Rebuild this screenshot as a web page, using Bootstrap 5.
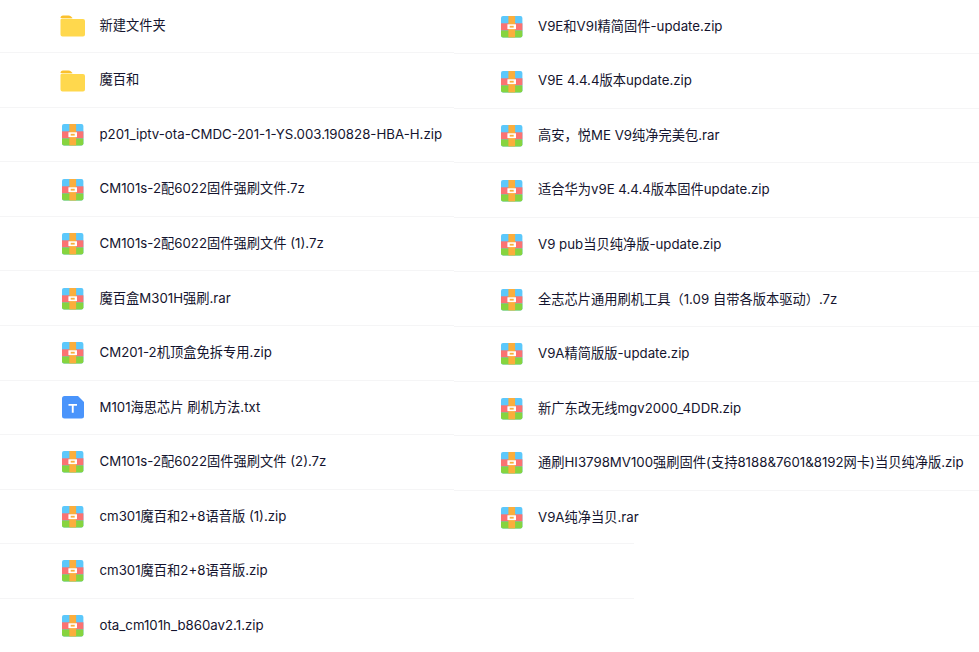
<!DOCTYPE html>
<html lang="zh">
<head>
    <meta charset="UTF-8">
    <title>文件列表</title>
    <link href="https://cdn.jsdelivr.net/npm/bootstrap@5.3.0/dist/css/bootstrap.min.css" rel="stylesheet">
    <style>
        body {
            background: #fff;
            color: #14142e;
            font-family: Inter, "Noto Sans CJK SC", sans-serif;
            font-size: 13.25px;
            font-weight: 400;
            overflow: hidden;
            height: 652px;
        }
        .file-grid {
            display: grid;
            grid-template-columns: 454px 180px 1fr;
            align-items: start;
        }
        .left-list { grid-column: 1 / 3; grid-row: 1; margin-top: -1.3px; }
        .right-list { grid-column: 2 / 4; grid-row: 1; margin-top: -.3px; position: relative; }
        .file-row {
            height: 54.56px;
            border-bottom: 1px solid #f5f5f6;
            padding-left: 59.5px;
            gap: 15px;
            white-space: nowrap;
            background: #fff;
        }
        .file-row span { padding-top: .6px; }
        .right-list .file-row { padding-left: 44.8px; gap: 14.2px; }
        .right-list .file-row:last-child { border-bottom: 0; background: transparent; }
        .file-ico { flex: 0 0 25px; width: 25px; height: 25px; }
    </style>
</head>
<body>
    <svg width="0" height="0" class="position-absolute">
        <defs>
            <symbol id="ico-folder" viewBox="0 0 25 25">
                <path d="M.5 5Q.5 2.500 3 2.500H8.500q1.500 0 2.500 1l1.500 1.500H.5z" fill="#fbc02d"/>
                <path d="M.5 7q0-1.500 1.500-1.500h9.500L13 6h10q2 0 2 2V21.500q0 2-2 2H2.500q-2 0-2-2z" fill="#ffd84d"/>
            </symbol>
            <symbol id="ico-zip" viewBox="0 0 25 25">
                <rect x="2" y="2" width="21.400" height="21.400" rx="2" fill="#5cc8fb"/>
                <rect x="2" y="9.300" width="21.400" height="7.100" fill="#fb7272"/>
                <path d="M2 16.400h21.400v5q0 2-2 2H4q-2 0-2-2z" fill="#86d43f"/>
                <rect x="9.400" y="2" width="6.700" height="21.400" fill="#fbae3c"/>
                <rect x="8.400" y="10.300" width="8.600" height="4.800" fill="#fff"/>
                <rect x="10.700" y="11.800" width="4" height="1.800" fill="#fbae3c"/>
            </symbol>
            <symbol id="ico-txt" viewBox="0 0 25 25">
                <path d="M4.500 1H18l6 6V21q0 2.500-2.500 2.500H4.500Q2 23.500 2 21V3.500Q2 1 4.500 1z" fill="#4a94fb"/>
                <path d="M8.500 9h8.500v1.800h-3.300v7h-1.900v-7H8.500z" fill="#fff"/>
            </symbol>
        </defs>
    </svg>

    <div class="file-grid">
        <div class="left-list" id="leftList"></div>
        <div class="right-list" id="rightList"></div>
    </div>

    <script src="https://cdn.jsdelivr.net/npm/bootstrap@5.3.0/dist/js/bootstrap.bundle.min.js"></script>
    <script>
        const leftFiles = [
            ['folder', '新建文件夹'], ['folder', '魔百和'],
            ['zip', 'p201_iptv-ota-CMDC-201-1-YS.003.190828-HBA-H.zip'],
            ['zip', 'CM101s-2配6022固件强刷文件.7z'],
            ['zip', 'CM101s-2配6022固件强刷文件 (1).7z'],
            ['zip', '魔百盒M301H强刷.rar'],
            ['zip', 'CM201-2机顶盒免拆专用.zip'],
            ['txt', 'M101海思芯片 刷机方法.txt'],
            ['zip', 'CM101s-2配6022固件强刷文件 (2).7z'],
            ['zip', 'cm301魔百和2+8语音版 (1).zip'],
            ['zip', 'cm301魔百和2+8语音版.zip'],
            ['zip', 'ota_cm101h_b860av2.1.zip']
        ];
        const rightFiles = [
            ['zip', 'V9E和V9I精简固件-update.zip'],
            ['zip', 'V9E 4.4.4版本update.zip'],
            ['zip', '高安，悦ME V9纯净完美包.rar'],
            ['zip', '适合华为v9E 4.4.4版本固件update.zip'],
            ['zip', 'V9 pub当贝纯净版-update.zip'],
            ['zip', '全志芯片通用刷机工具（1.09 自带各版本驱动）.7z'],
            ['zip', 'V9A精简版版-update.zip'],
            ['zip', '新广东改无线mgv2000_4DDR.zip'],
            ['zip', '通刷HI3798MV100强刷固件(支持8188&7601&8192网卡)当贝纯净版.zip'],
            ['zip', 'V9A纯净当贝.rar']
        ];
        function fillList(el, files) {
            files.forEach(f => {
                const row = document.createElement('div');
                row.className = 'file-row d-flex align-items-center';
                row.innerHTML = '<svg class="file-ico"><use href="#ico-' + f[0] + '"/></svg><span>' + f[1].replace(/&/g, '&amp;') + '</span>';
                el.appendChild(row);
            });
        }
        fillList(document.getElementById('leftList'), leftFiles);
        fillList(document.getElementById('rightList'), rightFiles);
    </script>
</body>
</html>
